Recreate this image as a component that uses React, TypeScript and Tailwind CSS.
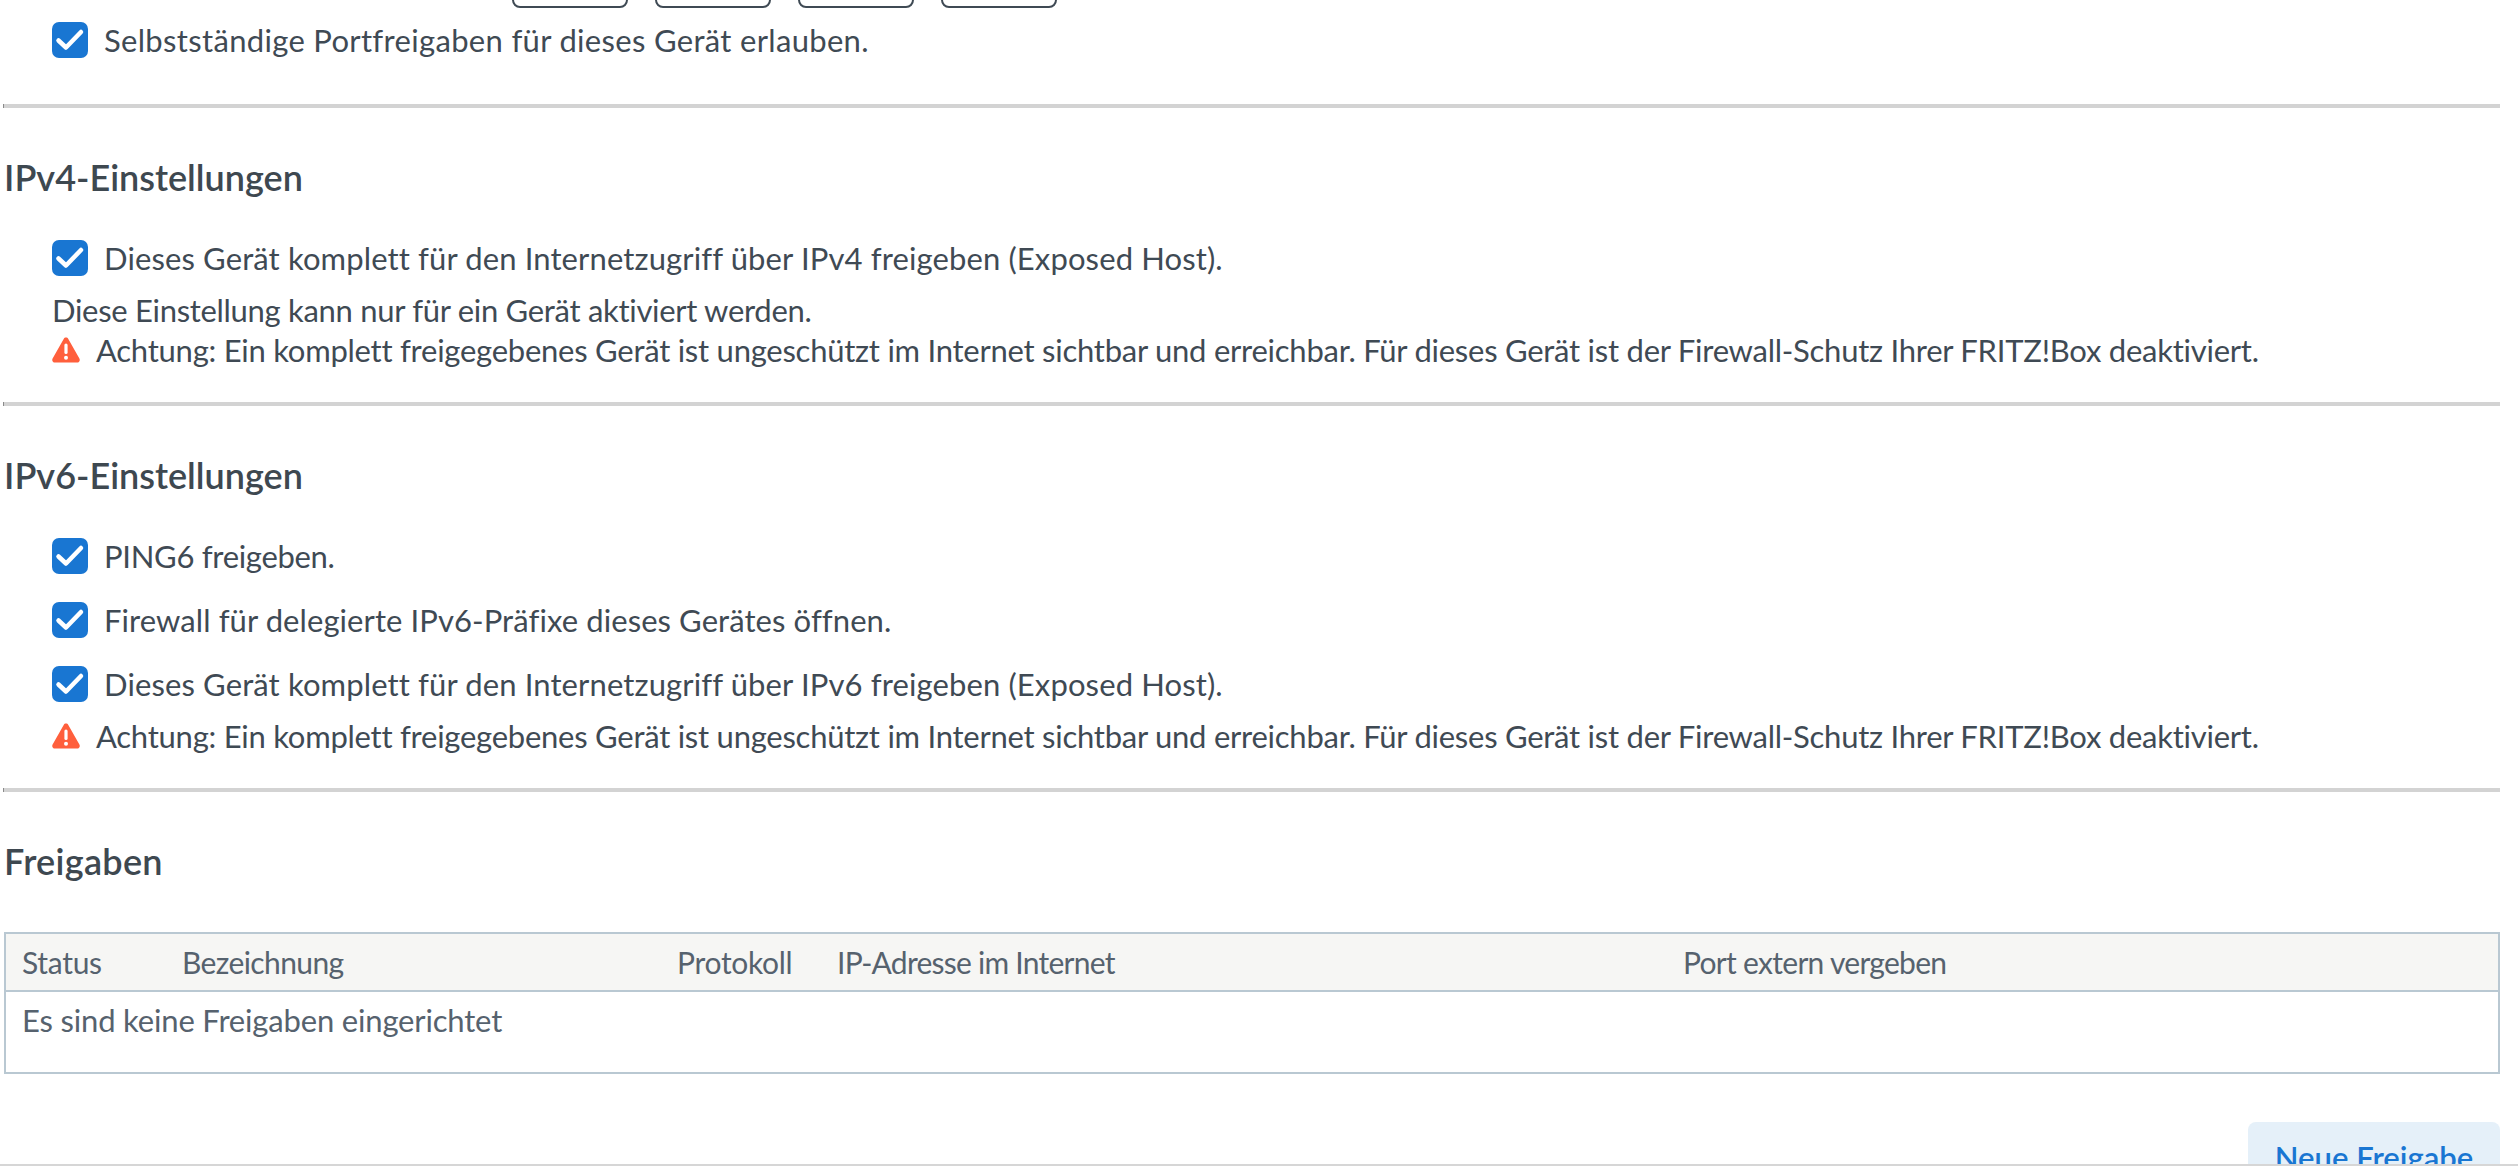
const font = "font-['Lato','Noto_Sans',sans-serif]";

const warningText =
  'Achtung: Ein komplett freigegebenes Gerät ist ungeschützt im Internet sichtbar und erreichbar. Für dieses Gerät ist der Firewall-Schutz Ihrer FRITZ!Box deaktiviert.';

const Check = ({ label, className = '', textClass = '' }: { label: string; className?: string; textClass?: string }) => (
  <div className={`flex h-9 items-center gap-4 pl-[52px] ${className}`}>
    <svg viewBox="0 0 36 36" className="h-9 w-9 shrink-0">
      <rect width="36" height="36" rx="7" fill="#1976d2" />
      <path d="M6.5 18.5 L14 25.5 L29 10" fill="none" stroke="#fff" strokeWidth="4.5" strokeLinecap="round" strokeLinejoin="round" />
    </svg>
    <span className={textClass}>{label}</span>
  </div>
);

const Warning = ({ className = '' }: { className?: string }) => (
  <div className={`flex h-9 items-center gap-4 pl-[52px] ${className}`}>
    <svg viewBox="0 0 28 26" className="h-[26px] w-7 shrink-0">
      <path d="M14 0.5 C15 0.5 15.8 1 16.3 1.9 L27.4 21.5 C28.4 23.4 27.2 25.5 25.1 25.5 L2.9 25.5 C0.8 25.5 -0.4 23.4 0.6 21.5 L11.7 1.9 C12.2 1 13 0.5 14 0.5 Z" fill="#ff5f3c" />
      <rect x="12.4" y="6.5" width="3.2" height="10.5" rx="1.6" fill="#fff" />
      <circle cx="14" cy="20.8" r="2" fill="#fff" />
    </svg>
    <span className="tracking-[-0.25px]">{warningText}</span>
  </div>
);

const Divider = ({ className = '' }: { className?: string }) => (
  <div className={`flex h-1 items-center ${className}`}>
    <div className="h-1 w-px bg-[#8a8a8a]" />
    <div className="h-1 flex-1 bg-[#d3d3d3]" />
  </div>
);

const Heading = ({ children, className = '' }: { children: string; className?: string }) => (
  <h2 className={`h-10 pl-1 text-[36px] leading-10 font-semibold text-[#3e4850] ${className}`}>{children}</h2>
);

export default function App() {
  return (
    <div className={`${font} flex h-screen flex-col overflow-hidden bg-white text-[31px] text-[#3f4a54]`}>
      <main className="flex-1 overflow-hidden pr-[18px]">
        <div className="flex h-2 items-end pl-[512px]">
          <div className="flex gap-[27px]">
            {[0, 1, 2, 3].map((i) => (
              <div key={i} className="h-4 w-[116px] rounded-b-lg border-2 border-[#3f4a54]" />
            ))}
          </div>
        </div>
        <Check className="mt-[14px]" textClass="tracking-[0.32px]" label="Selbstständige Portfreigaben für dieses Gerät erlauben." />
        <Divider className="mt-[46px] ml-[3px]" />

        <Heading className="mt-[49px]">IPv4-Einstellungen</Heading>
        <Check className="mt-[43px]" textClass="tracking-[0.12px]" label="Dieses Gerät komplett für den Internetzugriff über IPv4 freigeben (Exposed Host)." />
        <div className="mt-4 h-9 pl-[52px] leading-9 tracking-[-0.3px]">Diese Einstellung kann nur für ein Gerät aktiviert werden.</div>
        <Warning className="mt-1" />
        <Divider className="mt-[34px] ml-[3px]" />

        <Heading className="mt-[49px]">IPv6-Einstellungen</Heading>
        <Check className="mt-[43px]" textClass="tracking-[-0.3px]" label="PING6 freigeben." />
        <Check className="mt-7" textClass="tracking-[0.08px]" label="Firewall für delegierte IPv6-Präfixe dieses Gerätes öffnen." />
        <Check className="mt-7" textClass="tracking-[0.12px]" label="Dieses Gerät komplett für den Internetzugriff über IPv6 freigeben (Exposed Host)." />
        <Warning className="mt-[16px]" />
        <Divider className="mt-[34px] ml-[3px]" />

        <Heading className="mt-[49px] tracking-[0.3px]">Freigaben</Heading>

        <div className="mt-[51px] ml-1 h-[142px] border-2 border-[#b9c8d2] text-[#56626e]">
          <div className="flex h-[58px] items-center border-b-2 border-[#b9c8d2] bg-[#f6f6f4] text-[30px] tracking-[-0.3px]">
            <div className="w-[176px] pl-4">Status</div>
            <div className="w-[495px] tracking-[-0.6px]">Bezeichnung</div>
            <div className="w-[160px]">Protokoll</div>
            <div className="w-[846px] tracking-[-0.75px]">IP-Adresse im Internet</div>
            <div className="tracking-[-0.7px]">Port extern vergeben</div>
          </div>
          <div className="px-4 pt-2 leading-10 tracking-[-0.17px]">Es sind keine Freigaben eingerichtet</div>
        </div>

        <div className="mt-12 flex justify-end">
          <button className="h-16 w-[252px] rounded-lg bg-[#e5f0f9] pt-[7px] font-semibold text-[#1976d2]">Neue Freigabe</button>
        </div>
      </main>
      <div className="h-0.5 shrink-0 bg-[#d6d6d6]" />
    </div>
  );
}
